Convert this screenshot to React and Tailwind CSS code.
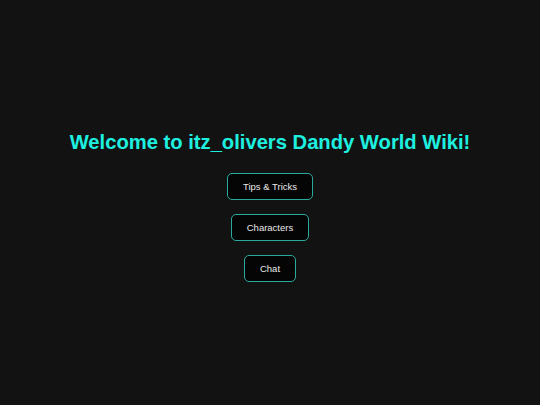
export default function App() {
  return (
    <div className="flex flex-col items-center justify-center min-h-screen bg-[#121212] font-['Liberation_Sans',Arial,sans-serif]">
      <h1 className="text-[20.2px] leading-[36px] font-bold text-[#1ef0e0] mb-[13px]">
        Welcome to itz_olivers Dandy World Wiki!
      </h1>
      <div className="flex flex-col items-center gap-[14px]">
        {['Tips & Tricks', 'Characters', 'Chat'].map((label) => (
          <button
            key={label}
            className="bg-[#050505] text-[#e8e8e8] text-[9.5px] leading-[11px] px-[15px] py-[7px] border border-[#2aaa9c] rounded-[5px]"
          >
            {label}
          </button>
        ))}
      </div>
    </div>
  )
}
